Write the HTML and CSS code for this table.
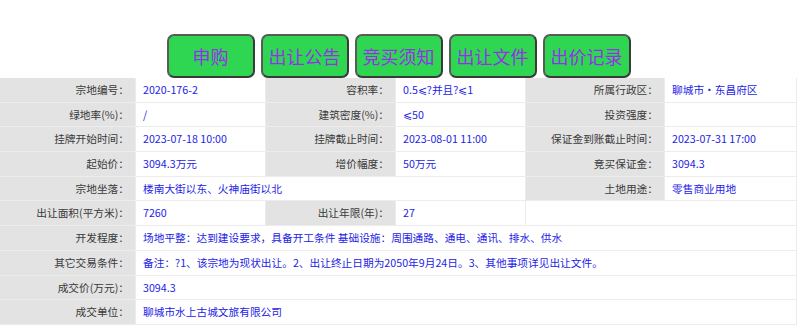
FILE: index.html
```html
<!DOCTYPE html>
<html lang="zh-CN">
<head>
<meta charset="utf-8">
<title>宗地信息</title>
<link rel="stylesheet" href="styles.css">
</head>
<body>
<div class="page">
  <div class="actions">
    <button class="btn">申购</button>
    <button class="btn">出让公告</button>
    <button class="btn">竞买须知</button>
    <button class="btn">出让文件</button>
    <button class="btn">出价记录</button>
  </div>
  <div class="info">
    <div class="lbl">宗地编号：</div><div class="val">2020-176-2</div>
    <div class="lbl">容积率：</div><div class="val">0.5⩽?并且?⩽1</div>
    <div class="lbl">所属行政区：</div><div class="val">聊城市·东昌府区</div>

    <div class="lbl">绿地率(%)：</div><div class="val">/</div>
    <div class="lbl">建筑密度(%)：</div><div class="val">⩽50</div>
    <div class="lbl">投资强度：</div><div class="val"></div>

    <div class="lbl">挂牌开始时间：</div><div class="val">2023-07-18 10:00</div>
    <div class="lbl">挂牌截止时间：</div><div class="val">2023-08-01 11:00</div>
    <div class="lbl">保证金到账截止时间：</div><div class="val">2023-07-31 17:00</div>

    <div class="lbl">起始价：</div><div class="val">3094.3万元</div>
    <div class="lbl">增价幅度：</div><div class="val">50万元</div>
    <div class="lbl">竞买保证金：</div><div class="val">3094.3</div>

    <div class="lbl">宗地坐落：</div><div class="val span3">楼南大街以东、火神庙街以北</div>
    <div class="lbl">土地用途：</div><div class="val">零售商业用地</div>

    <div class="lbl">出让面积(平方米)：</div><div class="val">7260</div>
    <div class="lbl">出让年限(年)：</div><div class="val">27</div>
    <div class="val span2"></div>

    <div class="lbl">开发程度：</div><div class="val span5">场地平整：达到建设要求，具备开工条件 基础设施：周围通路、通电、通讯、排水、供水</div>
    <div class="lbl">其它交易条件：</div><div class="val span5">备注：?1、该宗地为现状出让。2、出让终止日期为2050年9月24日。3、其他事项详见出让文件。</div>
    <div class="lbl">成交价(万元)：</div><div class="val span5">3094.3</div>
    <div class="lbl">成交单位：</div><div class="val span5">聊城市水上古城文旅有限公司</div>
  </div>
</div>
</body>
</html>
```

FILE: styles.css
```css
html, body {
  margin: 0;
  padding: 0;
  background: #fff;
}

.page {
  width: 797px;
  padding-top: 34px;
}

.actions {
  display: flex;
  justify-content: center;
  gap: 6px;
}

.btn {
  width: 88px;
  height: 44px;
  margin: 0;
  padding: 0;
  background: #2ed652;
  border: 2px solid #5a5a5a;
  border-right-color: #3a3a3a;
  border-bottom-color: #3a3a3a;
  border-radius: 7px;
  color: #962fe8;
  font-family: "Noto Sans CJK SC", sans-serif;
  font-size: 18px;
  line-height: 40px;
}

.info {
  display: grid;
  grid-template-columns: 135px 129px 129px 129px 138px 131px;
  grid-auto-rows: 23.7px;
  gap: 1px;
  background: #ececec;
  border-bottom: 1px solid #ececec;
  font-family: "Noto Sans CJK SC", sans-serif;
  font-size: 10.7px;
}

.lbl {
  background: #e3e3e3;
  color: #3a3a3a;
  text-align: right;
  padding-right: 6px;
  line-height: 23.7px;
  white-space: nowrap;
}

.val {
  background: #fff;
  color: #2323e6;
  padding-left: 7px;
  line-height: 23.7px;
  white-space: nowrap;
  overflow: hidden;
}

.span2 { grid-column: span 2; }
.span3 { grid-column: span 3; }
.span5 { grid-column: span 5; }
```
